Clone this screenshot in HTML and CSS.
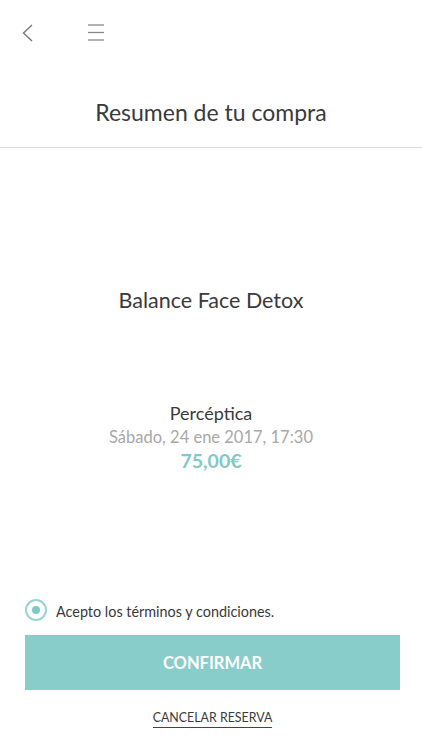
FILE: index.html
```html
<!DOCTYPE html>
<html lang="es">
<head>
    <meta charset="UTF-8">
    <meta name="viewport" content="width=device-width, initial-scale=1.0">
    <title>Resumen de tu compra</title>
    <link rel="stylesheet" href="styles.css">
</head>
<body>
    <div class="topbar">
        <a href="#" class="icon-btn back-btn" aria-label="Volver">
            <svg width="12" height="18" viewBox="0 0 12 18">
                <polyline points="10,1 1.5,9 10,17" fill="none" stroke="#777" stroke-width="1.4"/>
            </svg>
        </a>
        <a href="#" class="icon-btn menu-btn" aria-label="Menú">
            <svg width="16" height="17" viewBox="0 0 16 17">
                <line x1="0" y1="1" x2="16" y2="1" stroke="#888" stroke-width="1.3"/>
                <line x1="0" y1="8.5" x2="16" y2="8.5" stroke="#888" stroke-width="1.3"/>
                <line x1="0" y1="16" x2="16" y2="16" stroke="#888" stroke-width="1.3"/>
            </svg>
        </a>
    </div>

    <h1 class="page-title">Resumen de tu compra</h1>

    <div class="summary">
        <h2 class="product-name">Balance Face Detox</h2>

        <div class="booking">
            <p class="booking-place">Percéptica</p>
            <p class="booking-date">Sábado, 24 ene 2017, 17:30</p>
            <p class="booking-price">75,00€</p>
        </div>
    </div>

    <div class="actions">
        <label class="terms">
            <span class="radio"><span class="radio-dot"></span></span>
            <span class="terms-text">Acepto los términos y condiciones.</span>
        </label>

        <button class="confirm-btn">CONFIRMAR</button>

        <div class="cancel-row">
            <a href="#" class="cancel-link">CANCELAR RESERVA</a>
        </div>
    </div>
</body>
</html>
```

FILE: styles.css
```css
/* Resumen de compra */

body {
    margin: 0;
    padding: 0;
    background-color: #fff;
    font-family: Lato, "Open Sans", Arial, sans-serif;
    color: #3b3b3b;
    min-height: 100vh;
    display: flex;
    flex-direction: column;
}

.topbar {
    display: flex;
    align-items: flex-start;
    gap: 54px;
    height: 66px;
    box-sizing: border-box;
    padding: 24px 0 0 22px;
}

.icon-btn {
    display: block;
    line-height: 0;
}

.page-title {
    margin: 0;
    padding: 31px 0 20px;
    font-size: 23px;
    line-height: 30px;
    font-weight: 400;
    text-align: center;
    color: #3a3a3a;
    border-bottom: 1px solid #dedede;
}

.summary {
    text-align: center;
}

.product-name {
    margin: 140px 0 0;
    font-size: 21.5px;
    line-height: 24px;
    font-weight: 400;
    color: #3a3a3a;
}

.booking {
    margin-top: 89px;
}

.booking p {
    margin: 0;
    line-height: 24px;
}

.booking-place {
    font-size: 18px;
    color: #3a3a3a;
}

.booking-date {
    font-size: 16.5px;
    color: #a8a8a8;
}

.booking-price {
    font-size: 19.5px;
    font-weight: 700;
    color: #7fcac5;
}

.actions {
    margin-top: auto;
    padding: 0 22px 22px 25px;
}

.terms {
    display: flex;
    align-items: center;
    gap: 9px;
    height: 24px;
    cursor: pointer;
}

.radio {
    width: 22px;
    height: 22px;
    box-sizing: border-box;
    border: 2px solid #9ad4d0;
    border-radius: 50%;
    display: flex;
    align-items: center;
    justify-content: center;
}

.radio-dot {
    width: 8px;
    height: 8px;
    border-radius: 50%;
    background-color: #7fc9c4;
}

.terms-text {
    font-size: 14.4px;
    line-height: 24px;
    padding-top: 3px;
    color: #3a3a3a;
}

.confirm-btn {
    display: block;
    width: 100%;
    height: 55px;
    margin-top: 13px;
    border: none;
    background-color: #89cdca;
    color: #fff;
    font-family: inherit;
    font-size: 16.5px;
    font-weight: 700;
    cursor: pointer;
}

.cancel-row {
    margin-top: 20px;
    text-align: center;
    line-height: 0;
}

.cancel-link {
    display: inline-block;
    font-size: 12.4px;
    line-height: 16px;
    padding-bottom: 1px;
    color: #3a3a3a;
    text-decoration: none;
    border-bottom: 1px solid #444;
}
```
